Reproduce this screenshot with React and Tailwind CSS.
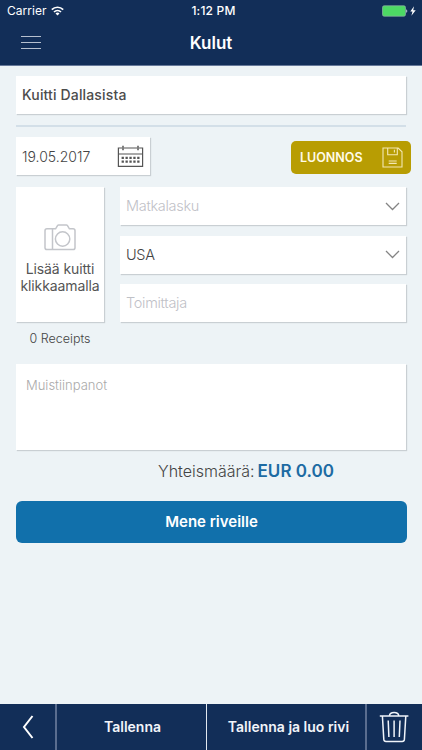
import React from 'react';

const CARD = 'bg-white shadow-[1px_1px_1px_#c9cfd3]';

const WifiIcon = () => (
  <svg className="-mt-px h-[10px] w-[13px]" viewBox="0 0 13 10" fill="none" stroke="#fff" strokeWidth="1.7">
    <path d="M0.8 3.6a8.1 8.1 0 0 1 11.4 0" />
    <path d="M3 6a5 5 0 0 1 7 0" />
    <path d="M6.5 9.6 4.5 7.5a2.9 2.9 0 0 1 4 0z" fill="#fff" stroke="none" />
  </svg>
);

const BatteryIcon = () => (
  <svg className="h-[12px] w-[36px]" viewBox="0 0 36 12">
    <rect x="0.5" y="0.8" width="23" height="10.4" rx="1.6" fill="#4cd964" stroke="#8fb3a6" strokeWidth="0.7" />
    <path d="M24.3 4.2c1.3.3 1.3 3.3 0 3.6z" fill="#dfe6ee" />
    <path d="M32 1.2 28.3 6.6h2.2l-1.1 4.2 4.3-5.6h-2.5z" fill="#fff" />
  </svg>
);

const CalendarIcon = () => (
  <svg className="h-[23px] w-[27px]" viewBox="0 0 27 23" fill="none" stroke="#555" strokeWidth="1.2">
    <path d="M5 3H1.4v18.3h24.2V3H22M7 3h13M1.4 9h24.2" />
    <path d="M6 .8v4.4M21 .8v4.4" strokeWidth="1.5" />
    <path d="M4.6 12.8h18M4.6 16.6h18" strokeWidth="2.2" strokeDasharray="2.3 1.6" />
  </svg>
);

const SaveIcon = () => (
  <svg className="h-[21px] w-[21px]" viewBox="0 0 21 21" fill="none" stroke="#f3e8b4" strokeWidth="1.1">
    <path d="M1 1h15.2L20 4.8V20H1z" />
    <path d="M5.7 1v6.7h9.6V1M12.4 2.8v2.6M6.7 14h8M6.7 16.4h8" />
  </svg>
);

const CameraIcon = () => (
  <svg className="h-[27px] w-[32px]" viewBox="0 0 32 27" fill="none" stroke="#c3c5ca" strokeWidth="1.5">
    <path d="M3 4.8h8.600l1.900-3.200q.4-.6 1.100-.6h7.800q.7 0 1.100.6l1.900 3.200H29q2 0 2 2v17q0 1.800-1.900 1.800H3q-2 0-2-1.800v-17q0-2 2-2zM8.500 4.800v20.800" />
    <circle cx="18.600" cy="15" r="7.200" />
  </svg>
);

const ChevronDown = () => (
  <svg className="h-[9px] w-[15px]" viewBox="0 0 15 9" fill="none" stroke="#848484" strokeWidth="1.3">
    <path d="M1 1l6.500 6.500L14 1" />
  </svg>
);

const TrashIcon = () => (
  <svg className="h-[32px] w-[30px]" viewBox="0 0 30 32" fill="none" stroke="#f0f4fa" strokeWidth="1.5">
    <path d="M.8 5h28.600M3.400 5l1.400 23.400q.2 2.100 2.200 2.100h16.200q2 0 2.200-2.100L26.800 5M10.400 4.800C10.800.4 19.400.4 19.800 4.800" />
    <path d="M9.200 9.500l.7 16.500M15.100 9.500V26M21 9.500L20.300 26" />
  </svg>
);

const StatusBar = () => (
  <div className="grid h-5 grid-cols-3 items-center pl-[7px] pr-[4px] pt-[2px] text-[12px] text-white">
    <div className="flex items-center gap-[4px]">
      <span className="tracking-[0.05px]">Carrier</span>
      <WifiIcon />
    </div>
    <span className="pl-[2px] text-center font-medium tracking-[0.2px]">1:12 PM</span>
    <div className="flex justify-end">
      <BatteryIcon />
    </div>
  </div>
);

const Field = ({ label, filled, select }) => (
  <div className={`flex h-[38px] items-center justify-between pl-[6px] pr-[6px] ${CARD}`}>
    <span className={filled ? 'text-[14.5px] font-light tracking-[-0.3px] text-[#444]' : 'text-[14.5px] font-light tracking-[-0.3px] text-[#bfc1c7]'}>
      {label}
    </span>
    {select && <ChevronDown />}
  </div>
);

const App = () => {
  return (
    <div className="flex h-[750px] w-[422px] flex-col bg-[#edf3f6] font-['Inter',sans-serif]">
      {/* Header */}
      <header className="h-[66px] border-b border-[#66799a] bg-[#122e58]">
        <StatusBar />
        <div className="grid h-[45px] grid-cols-3 items-center px-[21px]">
          <button className="flex w-5 flex-col gap-[5px]">
            <span className="h-px w-full bg-[#b6c0cf]"></span>
            <span className="h-px w-full bg-[#b6c0cf]"></span>
            <span className="h-px w-full bg-[#b6c0cf]"></span>
          </button>
          <h1 className="pt-[2px] text-center text-[17px] font-semibold text-white">Kulut</h1>
        </div>
      </header>

      {/* Form */}
      <main className="flex-1 px-4 pt-[10px]">
        <div className={`flex h-[38px] w-[390px] items-center px-[6px] pb-px text-[14px] font-medium tracking-[0.15px] text-[#4c4c4c] ${CARD}`}>
          Kuitti Dallasista
        </div>
        <div className="mt-[11px] h-[2px] bg-[#d3dfe8]"></div>

        <div className="mt-[10px] flex items-start justify-between">
          <div className={`flex h-[38px] w-[134px] items-center justify-between pl-[6px] pr-[6px] ${CARD}`}>
            <span className="text-[14px] font-light text-[#444]">19.05.2017</span>
            <CalendarIcon />
          </div>
          <button className="-mr-[5px] mt-[4px] flex h-[33px] w-[120px] items-center justify-between rounded-[5px] bg-[#b89d03] pl-[9px] pr-[8px] text-[12.5px] font-semibold text-[#fffbe8]">
            <span className="pt-px">LUONNOS</span>
            <SaveIcon />
          </button>
        </div>

        <div className="mt-[12px] flex gap-4">
          <div className="w-[88px]">
            <div className={`flex h-[135px] flex-col items-center pt-[37px] ${CARD}`}>
              <CameraIcon />
              <p className="mt-[9px] whitespace-nowrap text-center text-[14px] leading-[17px] tracking-[-0.1px] text-[#555]">
                Lisää kuitti
                <br />
                klikkaamalla
              </p>
            </div>
            <p className="mt-[8px] text-center text-[12.5px] leading-[18px] font-light text-[#444]">0 Receipts</p>
          </div>
          <div className="flex w-[286px] flex-col gap-[10.5px]">
            <Field label="Matkalasku" select />
            <Field label="USA" filled select />
            <Field label="Toimittaja" />
          </div>
        </div>

        <div className={`mt-[16px] h-[86px] w-[390px] px-[10px] pt-[11px] text-[13px] leading-[20px] font-light text-[#aaa] ${CARD}`}>
          Muistiinpanot
        </div>

        <div className="mt-[9px] flex h-6 items-center gap-[3px] pl-[142px] whitespace-nowrap">
          <span className="text-[16px] font-light text-[#444]">Yhteismäärä:</span>
          <span className="pt-[2px] text-[17px] font-semibold text-[#1d6ba3]">EUR 0.00</span>
        </div>

        <button className="mt-[18px] h-[42px] w-[391px] rounded-[6px] bg-[#1170ab] text-[15px] font-semibold text-white">
          Mene riveille
        </button>
      </main>

      {/* Bottom bar */}
      <footer className="flex h-[46px] bg-[#122e58] text-[14px] font-semibold text-[#f2f5fa]">
        <button className="flex w-[55px] items-center justify-center">
          <svg className="h-[24px] w-[12px]" viewBox="0 0 12 24" fill="none" stroke="#fff" strokeWidth="2">
            <path d="M10.5 1L2 12l8.5 11" />
          </svg>
        </button>
        <button className="w-[151px] border-l-2 border-[#5a6d8f] pb-[2px] pl-[2px]">Tallenna</button>
        <button className="w-[159px] whitespace-nowrap border-l border-[#e1e7ef] pb-[2px] pl-[5px]">Tallenna ja luo rivi</button>
        <button className="flex w-[57px] items-center justify-center border-l-2 border-[#5a6d8f] pr-[2px]">
          <TrashIcon />
        </button>
      </footer>
    </div>
  );
};

export default App;
